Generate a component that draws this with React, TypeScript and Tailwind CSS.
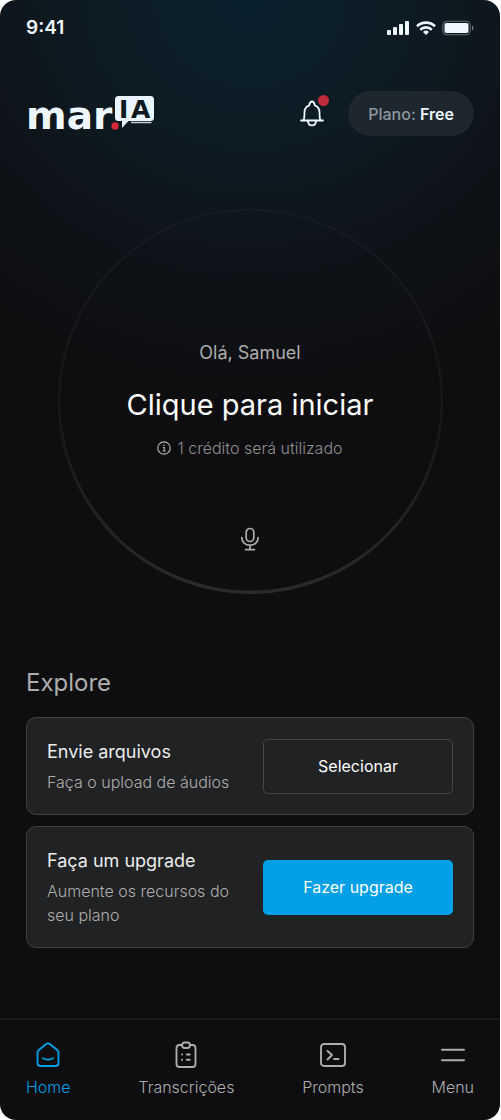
import type { ReactNode } from 'react';

const cards = [
  {
    title: 'Envie arquivos',
    description: 'Faça o upload de áudios',
    action: 'Selecionar',
    primary: false,
  },
  {
    title: 'Faça um upgrade',
    description: 'Aumente os recursos do seu plano',
    action: 'Fazer upgrade',
    primary: true,
  },
];

export default function App() {
  return (
    <div className="bg-white pr-px font-['Inter',sans-serif]">
      <div className="flex min-h-screen flex-col overflow-hidden rounded-2xl bg-[#0e0e10] bg-[radial-gradient(ellipse_440px_400px_at_50%_0%,#0b212e_0%,#0d1a22_40%,#0e1217_70%,#0e0e10_100%)] bg-no-repeat">
        <StatusBar />
        <Header />
        <main className="flex flex-1 flex-col px-[26px]">
          <RecordButton />
          <Explore />
        </main>
        <BottomNav />
      </div>
    </div>
  );
}

function StatusBar() {
  return (
    <div className="flex h-14 items-center justify-between px-[26px] text-[#eef7ff]">
      <span className="text-[19px] font-semibold">9:41</span>
      <div className="flex items-center gap-[6px]">
        <svg width="23" height="14" viewBox="0 0 23 14" fill="currentColor" aria-hidden="true">
          <rect x="0" y="9" width="4" height="5" rx="1" />
          <rect x="6" y="6" width="4" height="8" rx="1" />
          <rect x="12" y="3" width="4" height="11" rx="1" />
          <rect x="18" y="0" width="4" height="14" rx="1" />
        </svg>
        <svg width="20" height="14" viewBox="0 0 20 14" fill="none" stroke="currentColor" strokeWidth="2.6" aria-hidden="true">
          <path d="M1 5.2a13 13 0 0 1 18 0" />
          <path d="M4.2 8.7a8.4 8.4 0 0 1 11.6 0" />
          <path d="M10 14 7 11a4.3 4.3 0 0 1 6 0Z" fill="currentColor" stroke="none" />
        </svg>
        <svg width="32" height="16" viewBox="0 0 32 16" fill="none" aria-hidden="true">
          <rect x="0.75" y="1.25" width="27.5" height="13.5" rx="4" stroke="currentColor" strokeOpacity="0.4" />
          <rect x="2.5" y="3" width="24" height="10" rx="2" fill="currentColor" />
          <path d="M30 5.5v5a2.8 2.8 0 0 0 0-5Z" fill="currentColor" fillOpacity="0.45" />
        </svg>
      </div>
    </div>
  );
}

function Logo() {
  return (
    <svg width="128" height="45" viewBox="0 0 128 45" className="overflow-visible" role="img" aria-label="mar.IA">
      <text x="0" y="38" fill="#eef7ff" className="font-['DejaVu_Sans',sans-serif] text-[39px] font-bold">
        mar
      </text>
      {/* Speech bubble */}
      <path
        d="M92.5 5h32a3.5 3.5 0 0 1 3.5 3.5v18a3.5 3.5 0 0 1-3.5 3.5h-22l-6.5 7v-7h-3.5a3.5 3.5 0 0 1-3.5-3.5v-18a3.5 3.5 0 0 1 3.5-3.5Z"
        fill="#e8f4ff"
      />
      <path d="M105 31.5h20.5" stroke="#c4d0d9" strokeWidth="1.5" />
      <text y="27" fill="#0e1820" className="font-['DejaVu_Sans',sans-serif] text-[25px] font-bold">
        <tspan x="93">I</tspan>
        <tspan x="105">A</tspan>
      </text>
      <circle cx="89" cy="35" r="4" fill="#d42a38" stroke="#0e1820" strokeWidth="0.5" />
    </svg>
  );
}

function Header() {
  return (
    <header className="flex items-center justify-between px-[26px] pt-[35px]">
      <Logo />
      <div className="flex items-center gap-5">
        <button type="button" aria-label="Notificações" className="relative flex h-9 w-8 items-center justify-center text-[#eef7ff]">
          <svg width="26" height="28" viewBox="0 0 26 28" fill="none" stroke="currentColor" strokeWidth="1.8" strokeLinecap="round" strokeLinejoin="round">
            <path d="M2 20.5h22" />
            <path d="M4.5 20.2c1-1.8 1-4 1-8 0-3.6 2-5.8 4.7-6.9C10.6 3 11.3 1.5 13 1.5s2.4 1.5 2.8 3.8c2.7 1.1 4.7 3.3 4.7 6.9 0 4 0 6.2 1 8" />
            <path d="M9 20.7c0 3 1.6 4.7 4 4.7s4-1.7 4-4.7" />
          </svg>
          <span className="absolute -top-px -right-px size-[11px] rounded-full bg-[#c02c3d]" />
        </button>
        <button type="button" className="h-[45px] rounded-full bg-[#1e272e] px-5 text-base font-medium text-[#8d979e]">
          Plano: <span className="font-semibold text-[#eef7ff]">Free</span>
        </button>
      </div>
    </header>
  );
}

function RecordButton() {
  return (
    <button type="button" className="relative mx-auto mt-[73px] flex aspect-square w-full max-w-[385px] flex-col items-center pt-[132px]">
      {/* Ring, thicker towards the bottom */}
      <svg className="absolute inset-0 size-full" viewBox="0 0 385 385" aria-hidden="true">
        <defs>
          <linearGradient id="ring" x1="0" y1="0" x2="0" y2="1">
            <stop offset="0" stopColor="#fff" stopOpacity="0.04" />
            <stop offset="0.6" stopColor="#fff" stopOpacity="0.045" />
            <stop offset="1" stopColor="#fff" stopOpacity="0.12" />
          </linearGradient>
        </defs>
        <path
          fill="url(#ring)"
          fillRule="evenodd"
          d="M192.5 0a192.5 192.5 0 1 1 0 385a192.5 192.5 0 1 1 0-385ZM192.5 1.2a190.200 190.200 0 1 0 0 380.400a190.200 190.200 0 1 0 0-380.400Z"
        />
      </svg>
      <span className="text-lg leading-6 text-[#adadad]">Olá, Samuel</span>
      <span className="mt-5 text-[29px] leading-10 text-white">Clique para iniciar</span>
      <span className="mt-[11px] flex items-center gap-[6px] text-base leading-6 font-light text-[#8f8f8f]">
        <svg width="14" height="14" viewBox="0 0 14 14" fill="none" stroke="#b0b0b0" strokeWidth="1.2" aria-hidden="true">
          <circle cx="7" cy="7" r="6.2" />
          <path d="M5.8 6.5h1.4v3.5M5.7 10h3" />
          <circle cx="7" cy="4.3" r="0.8" fill="#b0b0b0" stroke="none" />
        </svg>
        1 crédito será utilizado
      </span>
      <svg className="mt-[67px]" width="24" height="24" viewBox="0 0 24 24" fill="none" stroke="#adadad" strokeWidth="1.7" strokeLinecap="round" aria-hidden="true">
        <rect x="8.2" y="1.5" width="7.6" height="13" rx="3.8" />
        <path d="M3.8 10.5c0 4.6 3.5 7.7 8.2 7.7s8.2-3.1 8.2-7.7M12 18.5v4M7.5 22.7h9" />
      </svg>
    </button>
  );
}

function Explore() {
  return (
    <section className="mt-[71px] pb-[70px]">
      <h2 className="text-2xl leading-9 text-[#adadad]">Explore</h2>
      <div className="mt-4 flex flex-col gap-[11px]">
        {cards.map((card) => (
          <div key={card.title} className="flex items-center justify-between rounded-[10px] border border-[#3f4042] bg-[#212224] p-5">
            <div className="w-[190px]">
              <h3 className="text-lg leading-7 text-[#ececec]">{card.title}</h3>
              <p className="mt-1 text-base leading-6 font-light text-[#adadad]">{card.description}</p>
            </div>
            <button
              type="button"
              className={
                card.primary
                  ? 'h-[55px] w-[190px] rounded-[5px] bg-[#009fe6] text-base text-white'
                  : 'h-[55px] w-[190px] rounded-[5px] border border-[#454648] text-base text-white'
              }
            >
              {card.action}
            </button>
          </div>
        ))}
      </div>
    </section>
  );
}

function BottomNav() {
  return (
    <nav className="flex justify-between border-t-2 border-[#1a1a1c] px-[26px] pt-[21px] pb-[21px]">
      <NavItem label="Home" active>
        <path d="M3.5 11.5c0-1 .3-1.7 1.1-2.3l7.6-6.1c1.1-.9 2.5-.9 3.6 0l7.6 6.1c.8.6 1.1 1.3 1.1 2.3v10.500c0 2-1 3-3 3h-15c-2 0-3-1-3-3Z" />
        <path d="M9 17.3c2.8 1.7 7.2 1.7 10 0" />
      </NavItem>
      <NavItem label="Transcrições">
        <path d="M10 4H7.5c-2 0-3 1-3 3v16c0 2 1 3 3 3h13c2 0 3-1 3-3V7c0-2-1-3-3-3H18" />
        <rect x="10" y="1.5" width="8" height="5.5" rx="2.7" />
        <path d="M10 13.5h.1M14.8 13.5h3M10 18.8h.1M14.8 18.8h3" />
      </NavItem>
      <NavItem label="Prompts">
        <rect x="2" y="3" width="24" height="22" rx="3" />
        <path d="m8.5 10 4.5 4-4.500 4.500M15 18h4.5" />
      </NavItem>
      <NavItem label="Menu">
        <path d="M3 8.8h22M3 19.2h22" />
      </NavItem>
    </nav>
  );
}

function NavItem({ label, active, children }: { label: string; active?: boolean; children: ReactNode }) {
  return (
    <a href="#" className={active ? 'flex flex-col items-center gap-[6px] text-[#009fe6]' : 'flex flex-col items-center gap-[6px] text-[#adadad]'}>
      <svg width="28" height="28" viewBox="0 0 28 28" fill="none" stroke="currentColor" strokeWidth="1.9" strokeLinecap="round" strokeLinejoin="round" aria-hidden="true">
        {children}
      </svg>
      <span className="text-base leading-6 font-light">{label}</span>
    </a>
  );
}
